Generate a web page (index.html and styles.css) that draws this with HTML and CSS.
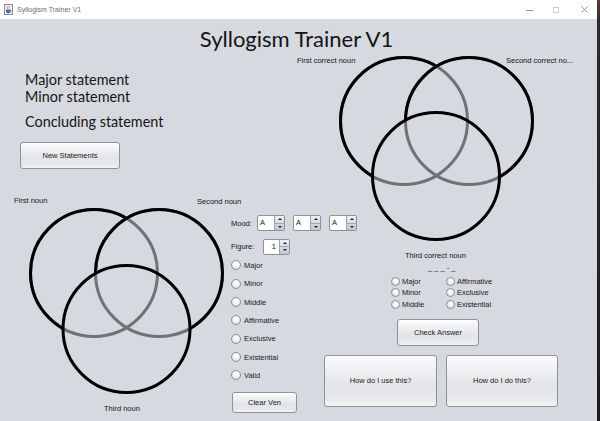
FILE: index.html
```html
<!DOCTYPE html>
<html>
<head>
<meta charset="utf-8">
<title>Syllogism Trainer V1</title>
<link rel="stylesheet" href="styles.css">
</head>
<body>
<div class="screen">
  <div class="window">
    <header class="titlebar">
      <span class="app-icon">
        <svg width="9" height="11" viewBox="0 0 9 11">
          <rect x="0.5" y="0.5" width="8" height="10" fill="#f4f4f4" stroke="#8a8a8a"/>
          <path d="M3 2.2 C2.2 3.2 4.2 3.6 3.4 4.8 M5 1.8 C4.2 2.8 6.2 3.2 5.4 4.4" stroke="#d2542c" stroke-width="0.8" fill="none"/>
          <path d="M2 5.6 H6.4 V7.4 C6.4 8.6 5.4 9.2 4.2 9.2 C3 9.2 2 8.6 2 7.4 Z" fill="#3a6fb0"/>
          <path d="M6.4 6.2 C7.6 6.2 7.6 7.8 6.2 7.8" stroke="#3a6fb0" stroke-width="0.7" fill="none"/>
        </svg>
      </span>
      <span class="win-title">Syllogism Trainer V1</span>
      <span class="win-controls">
        <svg class="wc wc-min" width="7" height="1" viewBox="0 0 7 1"><rect width="7" height="1" fill="#8f8f8f"/></svg>
        <svg class="wc wc-max" width="6" height="6" viewBox="0 0 6 6"><rect x="0.5" y="0.5" width="5" height="5" fill="none" stroke="#cfcfcf"/></svg>
        <svg class="wc wc-close" width="7" height="7" viewBox="0 0 7 7"><path d="M0.5 0.5 L6.5 6.5 M6.5 0.5 L0.5 6.5" stroke="#8a8a8a" stroke-width="0.9"/></svg>
      </span>
    </header>

    <main class="content">
      <h1 class="title">Syllogism Trainer V1</h1>

      <section class="statements">
        <p class="stmt">Major statement</p>
        <p class="stmt">Minor statement</p>
        <p class="stmt conclusion">Concluding statement</p>
        <button class="btn btn-new">New Statements</button>
      </section>

      <section class="venn venn-answer">
        <svg class="venn-svg" width="307" height="207" viewBox="0 0 307 207">
          <defs>
            <mask id="ans-m1" maskUnits="userSpaceOnUse" x="0" y="0" width="307" height="207">
              <rect width="307" height="207" fill="#fff"/>
              <circle cx="179" cy="66" r="63.5" fill="#000"/>
              <circle cx="146" cy="121" r="63.5" fill="#000"/>
            </mask>
            <mask id="ans-m2" maskUnits="userSpaceOnUse" x="0" y="0" width="307" height="207">
              <rect width="307" height="207" fill="#fff"/>
              <circle cx="146" cy="121" r="63.5" fill="#000"/>
            </mask>
          </defs>
          <circle class="ring dim" cx="114" cy="66" r="63.5"/>
          <circle class="ring" cx="114" cy="66" r="63.5" mask="url(#ans-m1)"/>
          <circle class="ring dim" cx="179" cy="66" r="63.5"/>
          <circle class="ring" cx="179" cy="66" r="63.5" mask="url(#ans-m2)"/>
          <circle class="ring" cx="146" cy="121" r="63.5"/>
        </svg>
        <span class="vlabel va-first">First correct noun</span>
        <span class="vlabel va-second">Second correct no...</span>
        <span class="vlabel va-third">Third correct noun</span>
      </section>

      <section class="workspace">
        <div class="venn venn-user">
          <svg class="venn-svg" width="228" height="231" viewBox="0 0 228 231">
            <defs>
              <mask id="usr-m1" maskUnits="userSpaceOnUse" x="0" y="0" width="228" height="231">
                <rect width="228" height="231" fill="#fff"/>
                <circle cx="159" cy="83" r="63.5" fill="#000"/>
                <circle cx="126.5" cy="139" r="63.5" fill="#000"/>
              </mask>
              <mask id="usr-m2" maskUnits="userSpaceOnUse" x="0" y="0" width="228" height="231">
                <rect width="228" height="231" fill="#fff"/>
                <circle cx="126.5" cy="139" r="63.5" fill="#000"/>
              </mask>
            </defs>
            <circle class="ring dim" cx="94" cy="83" r="63.5"/>
            <circle class="ring" cx="94" cy="83" r="63.5" mask="url(#usr-m1)"/>
            <circle class="ring dim" cx="159" cy="83" r="63.5"/>
            <circle class="ring" cx="159" cy="83" r="63.5" mask="url(#usr-m2)"/>
            <circle class="ring" cx="126.5" cy="139" r="63.5"/>
          </svg>
          <span class="vlabel vu-first">First noun</span>
          <span class="vlabel vu-second">Second noun</span>
          <span class="vlabel vu-third">Third noun</span>
        </div>

        <div class="controls">
          <div class="field-row mood-row">
            <span class="field-label mood-label">Mood:</span>
            <span class="spinner sp-mood"><span class="spin-field">A</span><span class="spin-arrows"><span class="arr up"></span><span class="arr down"></span></span></span>
            <span class="spinner sp-mood"><span class="spin-field">A</span><span class="spin-arrows"><span class="arr up"></span><span class="arr down"></span></span></span>
            <span class="spinner sp-mood"><span class="spin-field">A</span><span class="spin-arrows"><span class="arr up"></span><span class="arr down"></span></span></span>
          </div>
          <div class="field-row figure-row">
            <span class="field-label figure-label">Figure:</span>
            <span class="spinner sp-figure"><span class="spin-field num">1</span><span class="spin-arrows"><span class="arr up"></span><span class="arr down"></span></span></span>
          </div>
          <div class="radio-list">
            <label class="radio"><span class="dot"></span>Major</label>
            <label class="radio"><span class="dot"></span>Minor</label>
            <label class="radio"><span class="dot"></span>Middle</label>
            <label class="radio"><span class="dot"></span>Affirmative</label>
            <label class="radio"><span class="dot"></span>Exclusive</label>
            <label class="radio"><span class="dot"></span>Existential</label>
            <label class="radio"><span class="dot"></span>Valid</label>
          </div>
          <button class="btn btn-clear">Clear Ven</button>
        </div>
      </section>

      <section class="answer">
        <div class="dashes">_ _ _ - _</div>
        <div class="answer-options">
          <label class="radio small"><span class="dot"></span>Major</label>
          <label class="radio small"><span class="dot"></span>Affirmative</label>
          <label class="radio small"><span class="dot"></span>Minor</label>
          <label class="radio small"><span class="dot"></span>Exclusive</label>
          <label class="radio small"><span class="dot"></span>Middle</label>
          <label class="radio small"><span class="dot"></span>Existential</label>
        </div>
        <button class="btn btn-check">Check Answer</button>
        <div class="help-row">
          <button class="btn btn-help">How do I use this?</button>
          <button class="btn btn-help second">How do I do this?</button>
        </div>
      </section>
    </main>
  </div>
  <div class="desk-edge"></div>
</div>
</body>
</html>
```

FILE: styles.css
```css
* { box-sizing: border-box; }

html, body {
  margin: 0;
  padding: 0;
}

body {
  width: 600px;
  height: 421px;
  overflow: hidden;
  background: #1e1e1e;
  font-family: "Liberation Sans", Arial, sans-serif;
  color: #151515;
}

.screen {
  display: flex;
  width: 600px;
  height: 421px;
}

.window {
  width: 597px;
  height: 421px;
  display: flex;
  flex-direction: column;
  background: #d6d9df;
}

.desk-edge {
  width: 3px;
  background: linear-gradient(#5a3a3c 0, #2a2a2c 24px, #1b1b1d 100%);
}

/* ---------- title bar ---------- */
.titlebar {
  height: 19px;
  flex: none;
  display: flex;
  align-items: center;
  background: #ffffff;
  padding-left: 4px;
}

.app-icon {
  display: flex;
  width: 9px;
  height: 11px;
  margin-right: 4px;
}

.win-title {
  font-size: 7px;
  color: #6e6e6e;
}

.win-controls {
  margin-left: auto;
  display: flex;
  align-items: center;
  padding-right: 9px;
}

.wc { display: block; }
.wc-min { margin-top: 2px; }
.wc-max { margin-left: 20px; }
.wc-close { margin-left: 22px; }

/* ---------- content grid ---------- */
.content {
  flex: 1;
  display: grid;
  grid-template-columns: 290px 307px;
  grid-template-rows: 36px 135px 72px 159px;
}

.title {
  grid-column: 1 / 3;
  grid-row: 1;
  margin: 0;
  padding: 4px 4px 0 0;
  font-family: Lato, "Open Sans", sans-serif;
  font-weight: 400;
  font-size: 22px;
  line-height: 32px;
  text-align: center;
  color: #141414;
}

/* ---------- statements ---------- */
.statements {
  grid-column: 1;
  grid-row: 2;
  padding: 17px 0 0 20px;
  display: flex;
  flex-direction: column;
  align-items: flex-start;
}

.stmt {
  margin: 0;
  padding-left: 5px;
  font-family: Lato, "Open Sans", sans-serif;
  font-size: 14.4px;
  line-height: 16.7px;
  color: #161616;
}

.stmt.conclusion { margin-top: 8.4px; }

/* ---------- buttons ---------- */
.btn {
  font-family: "Liberation Sans", Arial, sans-serif;
  font-size: 7.5px;
  color: #1a1a1a;
  border: 1px solid #8e9196;
  border-radius: 3px;
  background: linear-gradient(to bottom, #fbfbfc 0%, #eff0f2 30%, #e2e4e8 60%, #e6e8eb 85%, #f3f4f5 100%);
  padding: 0;
  margin: 0;
  text-align: center;
  box-shadow: inset 0 1px 0 #ffffff;
}

.btn-new {
  margin-top: 11.5px;
  width: 100px;
  height: 27px;
}

/* ---------- venn diagrams ---------- */
.venn {
  position: relative;
}

.venn-svg {
  display: block;
  overflow: visible;
}

.ring {
  fill: none;
  stroke: #000;
  stroke-width: 3;
}

.ring.dim {
  stroke: #717276;
}

.vlabel {
  position: absolute;
  font-size: 7.5px;
  line-height: 9px;
  white-space: nowrap;
  color: #151515;
}

.venn-answer {
  grid-column: 2;
  grid-row: 2 / 4;
}

.va-first { left: 7px; top: 1px; }
.va-second { left: 216px; top: 1px; }
.va-third { left: 115px; top: 196px; }

/* ---------- user workspace ---------- */
.workspace {
  grid-column: 1;
  grid-row: 3 / 5;
  display: flex;
}

.venn-user {
  flex: none;
  width: 228px;
  height: 231px;
}

.vu-first { left: 14px; top: 5.6px; }
.vu-second { left: 197px; top: 7.2px; }
.vu-third { left: 104px; top: 214px; }

.controls {
  flex: none;
  padding-top: 25px;
  display: flex;
  flex-direction: column;
  align-items: flex-start;
}

.field-row {
  display: flex;
  align-items: center;
  white-space: nowrap;
}

.field-label {
  font-size: 7.5px;
  margin-left: 3px;
}

.mood-label { width: 26px; }
.figure-label { width: 32px; }

.figure-row { margin-top: 8px; }

.spinner {
  display: flex;
  height: 16px;
  border: 1px solid #8d9197;
  border-radius: 2px;
  background: #ffffff;
  overflow: hidden;
}

.sp-mood { width: 28px; margin-right: 8px; }
.sp-figure { width: 27px; height: 15.5px; }

.spin-field {
  flex: 1;
  font-size: 7.5px;
  line-height: 14px;
  padding-left: 2px;
}

.spin-field.num {
  text-align: right;
  padding: 0 3px 0 0;
}

.spin-arrows {
  width: 10px;
  display: flex;
  flex-direction: column;
  border-left: 1px solid #9da3ab;
  background: linear-gradient(to bottom, #eef1f5 0%, #d5dbe3 50%, #bec6d0 100%);
}

.arr {
  flex: 1;
  display: flex;
  align-items: center;
  justify-content: center;
}

.arr.up { border-bottom: 1px solid #a3a9b1; }

.arr::before {
  content: "";
  width: 0;
  height: 0;
  border-left: 2px solid transparent;
  border-right: 2px solid transparent;
}

.arr.up::before { border-bottom: 2.5px solid #1f1f1f; }
.arr.down::before { border-top: 2.5px solid #1f1f1f; }

.radio-list {
  margin-top: 1.8px;
  display: flex;
  flex-direction: column;
}

.radio {
  display: flex;
  align-items: center;
  height: 18.33px;
  font-size: 7.5px;
  white-space: nowrap;
  color: #1a1a1a;
}

.dot {
  width: 10px;
  height: 10px;
  margin: 0 3px 0 3px;
  border-radius: 50%;
  border: 1px solid #8b8f95;
  background: radial-gradient(circle at 55% 35%, #ffffff 0%, #f1f2f4 45%, #cdd1d7 100%);
}

.btn-clear {
  margin-top: 7.8px;
  margin-left: 4px;
  width: 65px;
  height: 21px;
}

/* ---------- answer panel ---------- */
.answer {
  grid-column: 2;
  grid-row: 4;
  display: flex;
  flex-direction: column;
  align-items: flex-start;
}

.dashes {
  margin-top: 1px;
  padding-left: 138px;
  font-size: 7.5px;
  line-height: 9px;
  white-space: pre;
  color: #2a2a2a;
}

.answer-options {
  margin-top: 3.2px;
  margin-left: 101px;
  display: grid;
  grid-template-columns: 55px 55px;
  grid-auto-rows: 11.67px;
}

.radio.small { height: 11.67px; }

.radio.small .dot {
  width: 9px;
  height: 9px;
  margin: 0 2px 0 0;
}

.btn-check {
  margin-top: 8.8px;
  margin-left: 107px;
  width: 82px;
  height: 27px;
}

.help-row {
  display: flex;
  gap: 9px;
  margin-top: 9px;
  margin-left: 34px;
}

.btn-help {
  width: 113px;
  height: 52px;
}

.btn-help.second { width: 112px; }
```
